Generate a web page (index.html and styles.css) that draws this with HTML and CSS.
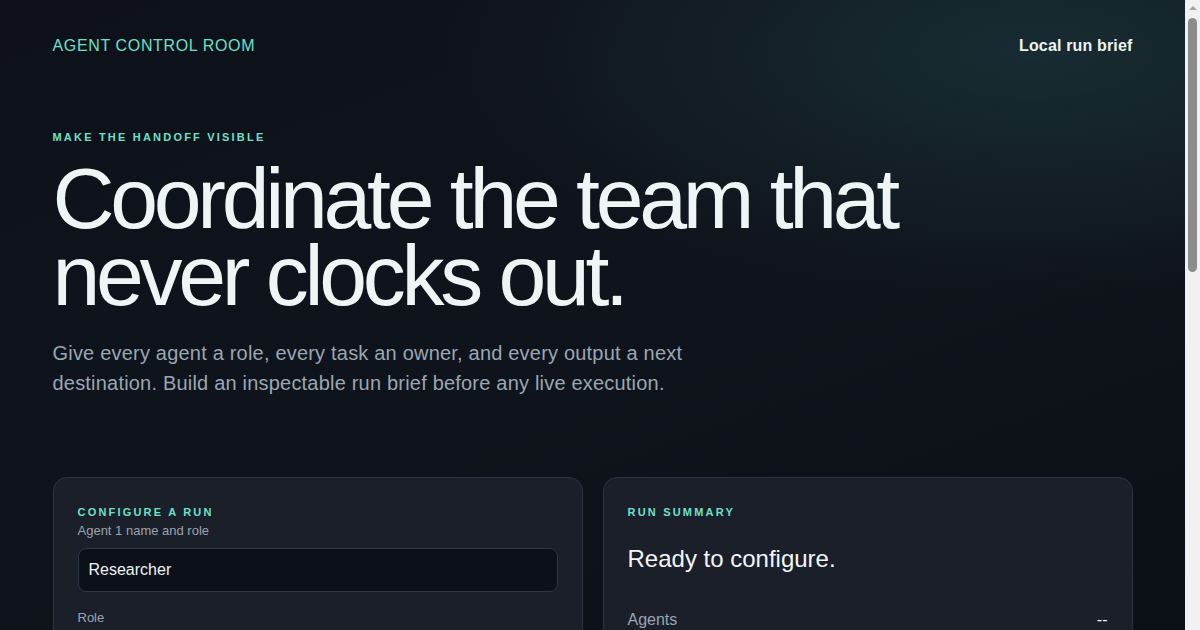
FILE: index.html
```html
<!DOCTYPE html>
<html lang="en">
<head>
  <meta charset="UTF-8">
  <meta name="viewport" content="width=device-width, initial-scale=1.0">
  <title>Agent Control Room</title>
  <link rel="stylesheet" href="styles.css">
</head>
<body>
  <div class="page">
    <!-- Top bar -->
    <header class="topbar">
      <span class="brand">AGENT CONTROL ROOM</span>
      <span class="topbar-note">Local run brief</span>
    </header>

    <!-- Hero -->
    <section class="hero">
      <p class="eyebrow">MAKE THE HANDOFF VISIBLE</p>
      <h1>Coordinate the team that<br>never clocks out.</h1>
      <p class="lede">Give every agent a role, every task an owner, and every output a next destination. Build an inspectable run brief before any live execution.</p>
    </section>

    <!-- Workspace -->
    <section class="workspace">
      <form class="card config">
        <p class="card-label">CONFIGURE A RUN</p>
        <div class="field">
          <label for="agent-name">Agent 1 name and role</label>
          <input type="text" id="agent-name" value="Researcher">
        </div>
        <div class="field">
          <label for="agent-role">Role</label>
          <input type="text" id="agent-role" value="Collects sources and drafts findings">
        </div>
        <div class="field">
          <label for="agent-2">Agent 2 name</label>
          <input type="text" id="agent-2" value="Reviewer">
        </div>
        <div class="field">
          <label for="agent-2-role">Role</label>
          <input type="text" id="agent-2-role" value="Checks claims and flags gaps">
        </div>
        <div class="field">
          <label for="task">Task</label>
          <textarea id="task" rows="4">Summarise this week's support tickets and route open questions to the owning team.</textarea>
        </div>
        <div class="field">
          <label for="output">Output destination</label>
          <input type="text" id="output" value="Shared notes doc">
        </div>
        <button type="button">Build run brief</button>
      </form>

      <aside class="card summary">
        <p class="card-label">RUN SUMMARY</p>
        <h2>Ready to configure.</h2>
        <dl class="stats">
          <div class="stat"><dt>Agents</dt><dd>--</dd></div>
          <div class="stat"><dt>Tasks</dt><dd>--</dd></div>
          <div class="stat"><dt>Handoffs</dt><dd>--</dd></div>
          <div class="stat"><dt>Destination</dt><dd>--</dd></div>
        </dl>
        <p class="summary-note">Fill in the agents and task on the left to preview who owns each step and where the results go next.</p>
      </aside>
    </section>

    <footer class="footer">Nothing runs until you review the brief.</footer>
  </div>

  <!-- window scrollbar, as the browser drew it -->
  <div class="scrollbar" aria-hidden="true">
    <span class="scroll-arrow"></span>
    <span class="scroll-thumb"></span>
  </div>
</body>
</html>
```

FILE: styles.css
```css
html {
  background: #0d1118;
}

body {
  margin: 0;
  padding-right: 15px;
  min-height: 100vh;
  font-family: "Liberation Sans", Arial, sans-serif;
  color: #eef5f5;
  background:
    radial-gradient(ellipse 70% 55% at 86% 8%, rgba(28, 52, 58, 0.75), rgba(28, 52, 58, 0) 70%),
    linear-gradient(160deg, #0e111a 0%, #0f141c 55%, #0b0f16 100%);
  background-attachment: fixed;
}

.page {
  max-width: 1080px;
  margin: 0 auto;
  padding-bottom: 80px;
}

.topbar {
  display: flex;
  justify-content: space-between;
  align-items: center;
  height: 92px;

  .brand {
    color: #6fe0c8;
    font-size: 16px;
    letter-spacing: 0.04em;
  }

  .topbar-note {
    color: #eef3f5;
    font-size: 16px;
    font-weight: bold;
    letter-spacing: 0.01em;
  }
}

.hero {
  padding-top: 39px;

  .eyebrow {
    margin: 0;
    color: #6fe0c8;
    font-size: 11px;
    font-weight: bold;
    letter-spacing: 0.2em;
  }

  h1 {
    margin: 17px 0 0;
    font-size: 86px;
    font-weight: normal;
    line-height: 0.9;
    letter-spacing: -0.05em;
    color: #eef5f5;
  }

  .lede {
    max-width: 680px;
    margin: 23px 0 0;
    color: #9aa7b3;
    font-size: 20px;
    letter-spacing: 0.2px;
    line-height: 30px;
  }
}

.workspace {
  display: grid;
  grid-template-columns: 1fr 1fr;
  gap: 20px;
  margin-top: 79px;
  align-items: start;
}

.card {
  background: #1a1f2a;
  border: 1px solid #2b3442;
  border-radius: 14px;
  padding: 28px 24px 28px;
}

.card-label {
  margin: 0;
  color: #6fe0c8;
  font-size: 11px;
  font-weight: bold;
  letter-spacing: 0.2em;
}

.config {
  display: flex;
  flex-direction: column;
  gap: 18px;

  .card-label {
    margin-bottom: -13px;
  }

  .field {
    display: flex;
    flex-direction: column;
    gap: 10px;
  }

  label {
    color: #9aa4b0;
    font-size: 13px;
  }

  input,
  textarea {
    box-sizing: border-box;
    width: 100%;
    padding: 12px 10px;
    background: #0c1119;
    border: 1px solid #2c3848;
    border-radius: 8px;
    color: #eef3f5;
    font-family: "Liberation Sans", Arial, sans-serif;
    font-size: 16px;
  }

  textarea {
    resize: vertical;
    line-height: 1.4;
  }

  button {
    margin-top: 6px;
    padding: 14px;
    background: #6fe0c8;
    color: #0c1119;
    border: none;
    border-radius: 8px;
    font-family: "Liberation Sans", Arial, sans-serif;
    font-size: 15px;
    font-weight: bold;
    cursor: pointer;
  }
}

.summary {
  h2 {
    margin: 27px 0 0;
    font-size: 24px;
    font-weight: normal;
    color: #f2f6f7;
  }

  .stats {
    margin: 35px 0 0;
  }

  .stat {
    display: flex;
    justify-content: space-between;
    padding: 3px 0 14px;
    margin-bottom: 14px;
    border-bottom: 1px solid #262f3c;

    dt {
      color: #9aa4b0;
      font-size: 16px;
    }

    dd {
      margin: 0;
      color: #eef3f5;
      font-size: 16px;
    }
  }

  .summary-note {
    margin: 10px 0 0;
    color: #7f8b98;
    font-size: 14px;
    line-height: 1.5;
  }
}

.footer {
  margin-top: 60px;
  color: #6b7784;
  font-size: 13px;
}

.scrollbar {
  position: fixed;
  top: 0;
  right: 0;
  bottom: 0;
  width: 15px;
  background: #f1f1f1;

  .scroll-arrow {
    position: absolute;
    top: 6px;
    left: 4px;
    border-left: 4px solid transparent;
    border-right: 4px solid transparent;
    border-bottom: 4px solid #a3a3a3;
  }

  .scroll-thumb {
    position: absolute;
    top: 18px;
    left: 3px;
    width: 9px;
    height: 254px;
    border-radius: 5px;
    background: #8c8c8c;
  }
}
```
